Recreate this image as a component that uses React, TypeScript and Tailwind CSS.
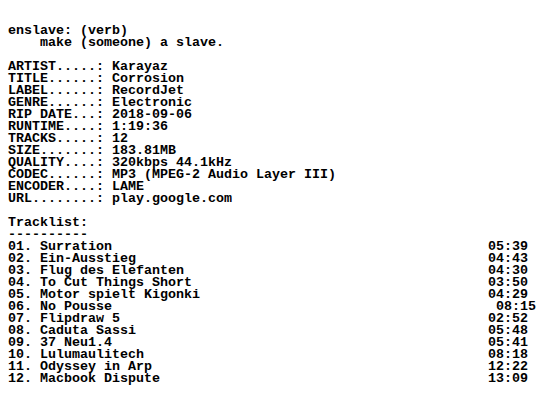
import React from "react";

const header = [
  "enslave: (verb)",
  "    make (someone) a slave.",
  "",
  "ARTIST.....: Karayaz",
  "TITLE......: Corrosion",
  "LABEL......: RecordJet",
  "GENRE......: Electronic",
  "RIP DATE...: 2018-09-06",
  "RUNTIME....: 1:19:36",
  "TRACKS.....: 12",
  "SIZE.......: 183.81MB",
  "QUALITY....: 320kbps 44.1kHz",
  "CODEC......: MP3 (MPEG-2 Audio Layer III)",
  "ENCODER....: LAME",
  "URL........: play.google.com",
  "",
  "Tracklist:",
  "----------",
];

const tracks: [string, string, number][] = [
  ["01. Surration", "05:39", 60],
  ["02. Ein-Ausstieg", "04:43", 60],
  ["03. Flug des Elefanten", "04:30", 60],
  ["04. To Cut Things Short", "03:50", 60],
  ["05. Motor spielt Kigonki", "04:29", 60],
  ["06. No Pousse", "08:15", 61],
  ["07. Flipdraw 5", "02:52", 60],
  ["08. Caduta Sassi", "05:48", 60],
  ["09. 37 Neu1.4", "05:41", 60],
  ["10. Lulumaulitech", "08:18", 60],
  ["11. Odyssey in Arp", "12:22", 60],
  ["12. Macbook Dispute", "13:09", 60],
];

export default function App() {
  const text = [
    ...header,
    ...tracks.map(([t, d, c]) => t.padEnd(c, " ") + d),
  ].join("\n");
  return (
    <div className="w-[544px] h-[408px] bg-white overflow-hidden">
      <pre className="m-0 pt-[25px] pl-[8px] font-['Liberation_Mono',monospace] text-[13.333px] leading-[12px] font-bold text-black">
        {text}
      </pre>
    </div>
  );
}
